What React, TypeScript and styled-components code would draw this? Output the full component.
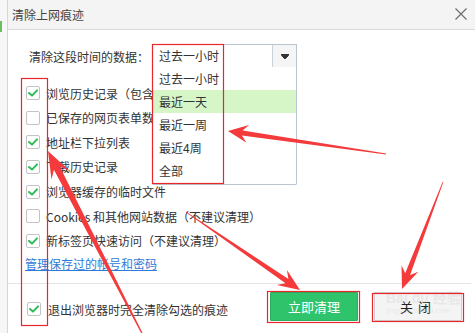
import React from "react";
import styled, { createGlobalStyle } from "styled-components";

const GlobalStyle = createGlobalStyle`
  html, body {
    margin: 0;
    padding: 0;
  }
  body {
    width: 475px;
    height: 333px;
    overflow: hidden;
    background: #ffffff;
    font-family: "Noto Sans CJK SC", "Noto Sans", sans-serif;
    color: #333333;
  }
`;

const Page = styled.div`
  position: relative;
  display: flex;
  width: 475px;
  height: 333px;
  overflow: hidden;
  background: #ffffff;
`;

const SideStrip = styled.div`
  width: 7px;
  border-right: 1px solid #d6d6d6;
  background: #f7f7f7;
  display: flex;
  flex-direction: column;
`;

const SideMark = styled.span`
  margin-top: 21px;
  width: 2px;
  height: 11px;
  background: #6cbf60;
`;

const Dialog = styled.div`
  flex: 1;
  display: flex;
  flex-direction: column;
  min-width: 0;
`;

const Header = styled.header`
  height: 30px;
  box-sizing: border-box;
  border-bottom: 1px solid #dadada;
  background: #f4f4f4;
  display: flex;
  align-items: center;
  justify-content: space-between;
  padding: 0 8px 0 4px;
`;

const Title = styled.h1`
  margin: 0;
  font-size: 12px;
  font-weight: normal;
  color: #444444;
`;

const CloseX = styled.svg`
  width: 12px;
  height: 12px;
  margin-top: -1px;
`;

const Body = styled.div`
  display: flex;
  flex-direction: column;
  padding-top: 14px;
`;

const TimeRow = styled.div`
  display: flex;
  align-items: center;
  height: 24px;
  padding-left: 21px;
`;

const FieldLabel = styled.span`
  font-size: 12px;
  margin-right: 3px;
`;

const SelectWrap = styled.div`
  position: relative;
  width: 145px;
  height: 24px;
  box-sizing: border-box;
  border: 1px solid #b9c5d1;
  display: flex;
  background: #ffffff;
`;

const SelectValue = styled.span`
  flex: 1;
  padding-left: 6px;
  font-size: 12px;
  line-height: 22px;
`;

const SelectButton = styled.span`
  width: 23px;
  border-left: 1px solid #c9d1d9;
  background: #f5f5f5;
  display: flex;
  align-items: center;
  justify-content: center;
`;

const DropList = styled.ul`
  position: absolute;
  top: 22px;
  left: -1px;
  width: 145px;
  box-sizing: border-box;
  margin: 0;
  padding: 0 0 2px;
  list-style: none;
  background: #ffffff;
  border: 1px solid #b9c5d1;
  border-top: none;
  border-radius: 0 0 2px 2px;
  z-index: 2;
`;

const DropItem = styled.li<{ $active?: boolean }>`
  height: 23px;
  line-height: 23px;
  padding-left: 6px;
  font-size: 12px;
  background: ${(p) => (p.$active ? "#d6f6c8" : "transparent")};
`;

const CheckList = styled.div`
  display: flex;
  flex-direction: column;
  margin-top: 12.7px;
  padding-left: 18px;
`;

const CheckRow = styled.label`
  display: flex;
  align-items: center;
  gap: 6px;
  height: 24.67px;
  font-size: 12px;
  white-space: nowrap;
`;

const Box = styled.span`
  width: 14px;
  height: 14px;
  box-sizing: border-box;
  border: 1px solid #c3c3c3;
  border-radius: 2px;
  background: #ffffff;
  display: flex;
  align-items: center;
  justify-content: center;
  flex-shrink: 0;
`;

const ManageLink = styled.a`
  margin-top: 3px;
  margin-left: 17px;
  font-size: 12px;
  line-height: 16px;
  color: #2f7bd8;
  text-decoration: underline;
  align-self: flex-start;
`;

const Footer = styled.footer`
  margin-top: 11px;
  margin-right: 4px;
  border-top: 1px solid #e4e4e4;
  padding: 8px 9px 0 19px;
  display: flex;
  align-items: center;
  gap: 7px;
  font-size: 12px;
`;

const FooterCheck = styled.div`
  display: flex;
  align-items: center;
  gap: 7px;
  margin-top: 5px;
`;

const Button = styled.button<{ $primary?: boolean }>`
  height: 29px;
  width: 88px;
  box-sizing: border-box;
  font-family: inherit;
  font-size: 13px;
  border-radius: 1px;
  padding: 0;
  cursor: pointer;
  margin-left: ${(p) => (p.$primary ? "auto" : "9px")};
  background: ${(p) => (p.$primary ? "#2fc46c" : "#f4f4f4")};
  color: ${(p) => (p.$primary ? "#ffffff" : "#222222")};
  border: 1px solid ${(p) => (p.$primary ? "#27b060" : "#cfcfcf")};
  letter-spacing: ${(p) => (p.$primary ? "0" : "5px")};
`;

const Overlay = styled.svg`
  position: absolute;
  left: 0;
  top: 0;
  width: 475px;
  height: 333px;
  pointer-events: none;
  z-index: 5;
`;

const Watermark = styled.div`
  position: absolute;
  left: 386px;
  top: 290px;
  display: flex;
  flex-direction: column;
  white-space: nowrap;
  color: rgba(200, 200, 200, 0.3);
  font-family: "Liberation Sans", "Noto Sans CJK SC", sans-serif;
  pointer-events: none;
  z-index: 4;
`;

const WaterBig = styled.span`
  font-size: 14px;
  font-weight: bold;
  line-height: 16px;
`;

const WaterSmall = styled.span`
  font-size: 8px;
  line-height: 10px;
`;

const Check = () => (
  <svg width="10" height="8" viewBox="0 0 10 8">
    <polyline
      points="1,4 4,6.6 9,1.4"
      fill="none"
      stroke="#2cbd58"
      strokeWidth="2"
      strokeLinecap="round"
      strokeLinejoin="round"
    />
  </svg>
);

const CheckBox = ({ checked }: { checked?: boolean }) => (
  <Box>{checked && <Check />}</Box>
);

// tapered red annotation arrow: thin at the tail, wide head at the tip
function arrowPoints(
  tx: number,
  ty: number,
  px: number,
  py: number,
  headLen: number,
  headHalf: number,
  shaft: number
) {
  const len = Math.hypot(px - tx, py - ty);
  const ux = (px - tx) / len;
  const uy = (py - ty) / len;
  const nx = -uy;
  const ny = ux;
  const bx = px - ux * headLen;
  const by = py - uy * headLen;
  const kx = px - ux * headLen * 0.72;
  const ky = py - uy * headLen * 0.72;
  const pts = [
    [tx + nx * 0.4, ty + ny * 0.4],
    [kx + nx * shaft, ky + ny * shaft],
    [bx + nx * headHalf, by + ny * headHalf],
    [px, py],
    [bx - nx * headHalf, by - ny * headHalf],
    [kx - nx * shaft, ky - ny * shaft],
    [tx - nx * 0.4, ty - ny * 0.4],
  ];
  return pts.map((p) => `${p[0].toFixed(1)},${p[1].toFixed(1)}`).join(" ");
}

const arrows = [
  { t: [386, 154], p: [228, 131], h: 20, w: 9, s: 2.6 },
  { t: [186, 212], p: [300, 290], h: 22, w: 9, s: 2.6 },
  { t: [443, 182], p: [402, 289], h: 22, w: 9, s: 2.6 },
  { t: [148, 345], p: [48, 151], h: 27, w: 10, s: 3.4 },
];

const rows = [
  { text: "浏览历史记录（包含最近关闭的标签页）", checked: true },
  { text: "已保存的网页表单数据", checked: false },
  { text: "地址栏下拉列表", checked: true },
  { text: "下载历史记录", checked: true },
  { text: "浏览器缓存的临时文件", checked: true },
  { text: "Cookies 和其他网站数据（不建议清理）", checked: false },
  { text: "新标签页快速访问（不建议清理）", checked: true },
];

const options = ["过去一小时", "最近一天", "最近一周", "最近4周", "全部"];

export default function App() {
  return (
    <Page>
      <GlobalStyle />
      <SideStrip>
        <SideMark />
      </SideStrip>
      <Dialog>
        <Header>
          <Title>清除上网痕迹</Title>
          <CloseX viewBox="0 0 12 12">
            <path d="M0.5 0.5 L11.5 11.5 M11.5 0.5 L0.5 11.5" stroke="#6a6a6a" strokeWidth="1.1" />
          </CloseX>
        </Header>
        <Body>
          <TimeRow>
            <FieldLabel>清除这段时间的数据：</FieldLabel>
            <SelectWrap>
              <SelectValue>过去一小时</SelectValue>
              <SelectButton>
                <svg width="8" height="5" viewBox="0 0 8 5">
                  <path d="M0 0.5 H8 M0.5 1.5 H7.5 L4 5 Z" stroke="#333" strokeWidth="1" fill="#333" />
                </svg>
              </SelectButton>
              <DropList>
                {options.map((o, i) => (
                  <DropItem key={o} $active={i === 1}>
                    {o}
                  </DropItem>
                ))}
              </DropList>
            </SelectWrap>
          </TimeRow>
          <CheckList>
            {rows.map((r) => (
              <CheckRow key={r.text}>
                <CheckBox checked={r.checked} />
                {r.text}
              </CheckRow>
            ))}
          </CheckList>
          <ManageLink>管理保存过的帐号和密码</ManageLink>
          <Footer>
            <FooterCheck>
              <CheckBox checked />
              退出浏览器时完全清除勾选的痕迹
            </FooterCheck>
            <Button $primary>立即清理</Button>
            <Button>关闭</Button>
          </Footer>
        </Body>
      </Dialog>

      <Watermark>
        <WaterBig>Bai du 经验</WaterBig>
        <WaterSmall>jingyan.baidu.com</WaterSmall>
      </Watermark>

      <Overlay viewBox="0 0 475 333">
        <g fill="none" stroke="#e8262b" strokeWidth="1.2">
          <rect x="152.5" y="44.5" width="71" height="139" />
          <rect x="21.5" y="78.5" width="26" height="247" />
          <rect x="267.5" y="291.5" width="92" height="31" />
          <rect x="372.5" y="293.5" width="91" height="28" />
        </g>
        <g fill="#f43a3a">
          {arrows.map((a, i) => (
            <polygon key={i} points={arrowPoints(a.t[0], a.t[1], a.p[0], a.p[1], a.h, a.w, a.s)} />
          ))}
        </g>
      </Overlay>
    </Page>
  );
}
